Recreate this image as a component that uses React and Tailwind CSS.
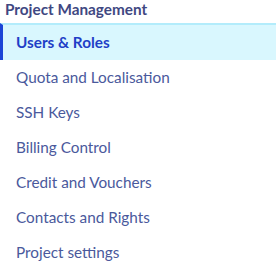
const items = [
  'Quota and Localisation',
  'SSH Keys',
  'Billing Control',
  'Credit and Vouchers',
  'Contacts and Rights',
  'Project settings',
];

export default function App() {
  return (
    <div className="w-[280px] h-[265px] bg-white font-['Lato',sans-serif] overflow-hidden">
      <div className="pl-[5px] h-[23px] leading-[18px] text-[15.3px] font-bold text-[#3f4882]">
        Project Management
      </div>
      <ul className="w-[276px]">
        <li className="h-[37px] border-t-2 border-[#b3ecfb] bg-[#d9f7fe] border-l-[3px] border-l-[#1b45d6] pl-[13px] flex items-center text-[15.3px] font-bold text-[#1f3fc7]">
          Users &amp; Roles
        </li>
        {items.map((t) => (
          <li key={t} className="h-[35px] pl-4 flex items-center text-[15.3px] text-[#4a599c]">
            {t}
          </li>
        ))}
      </ul>
    </div>
  );
}
